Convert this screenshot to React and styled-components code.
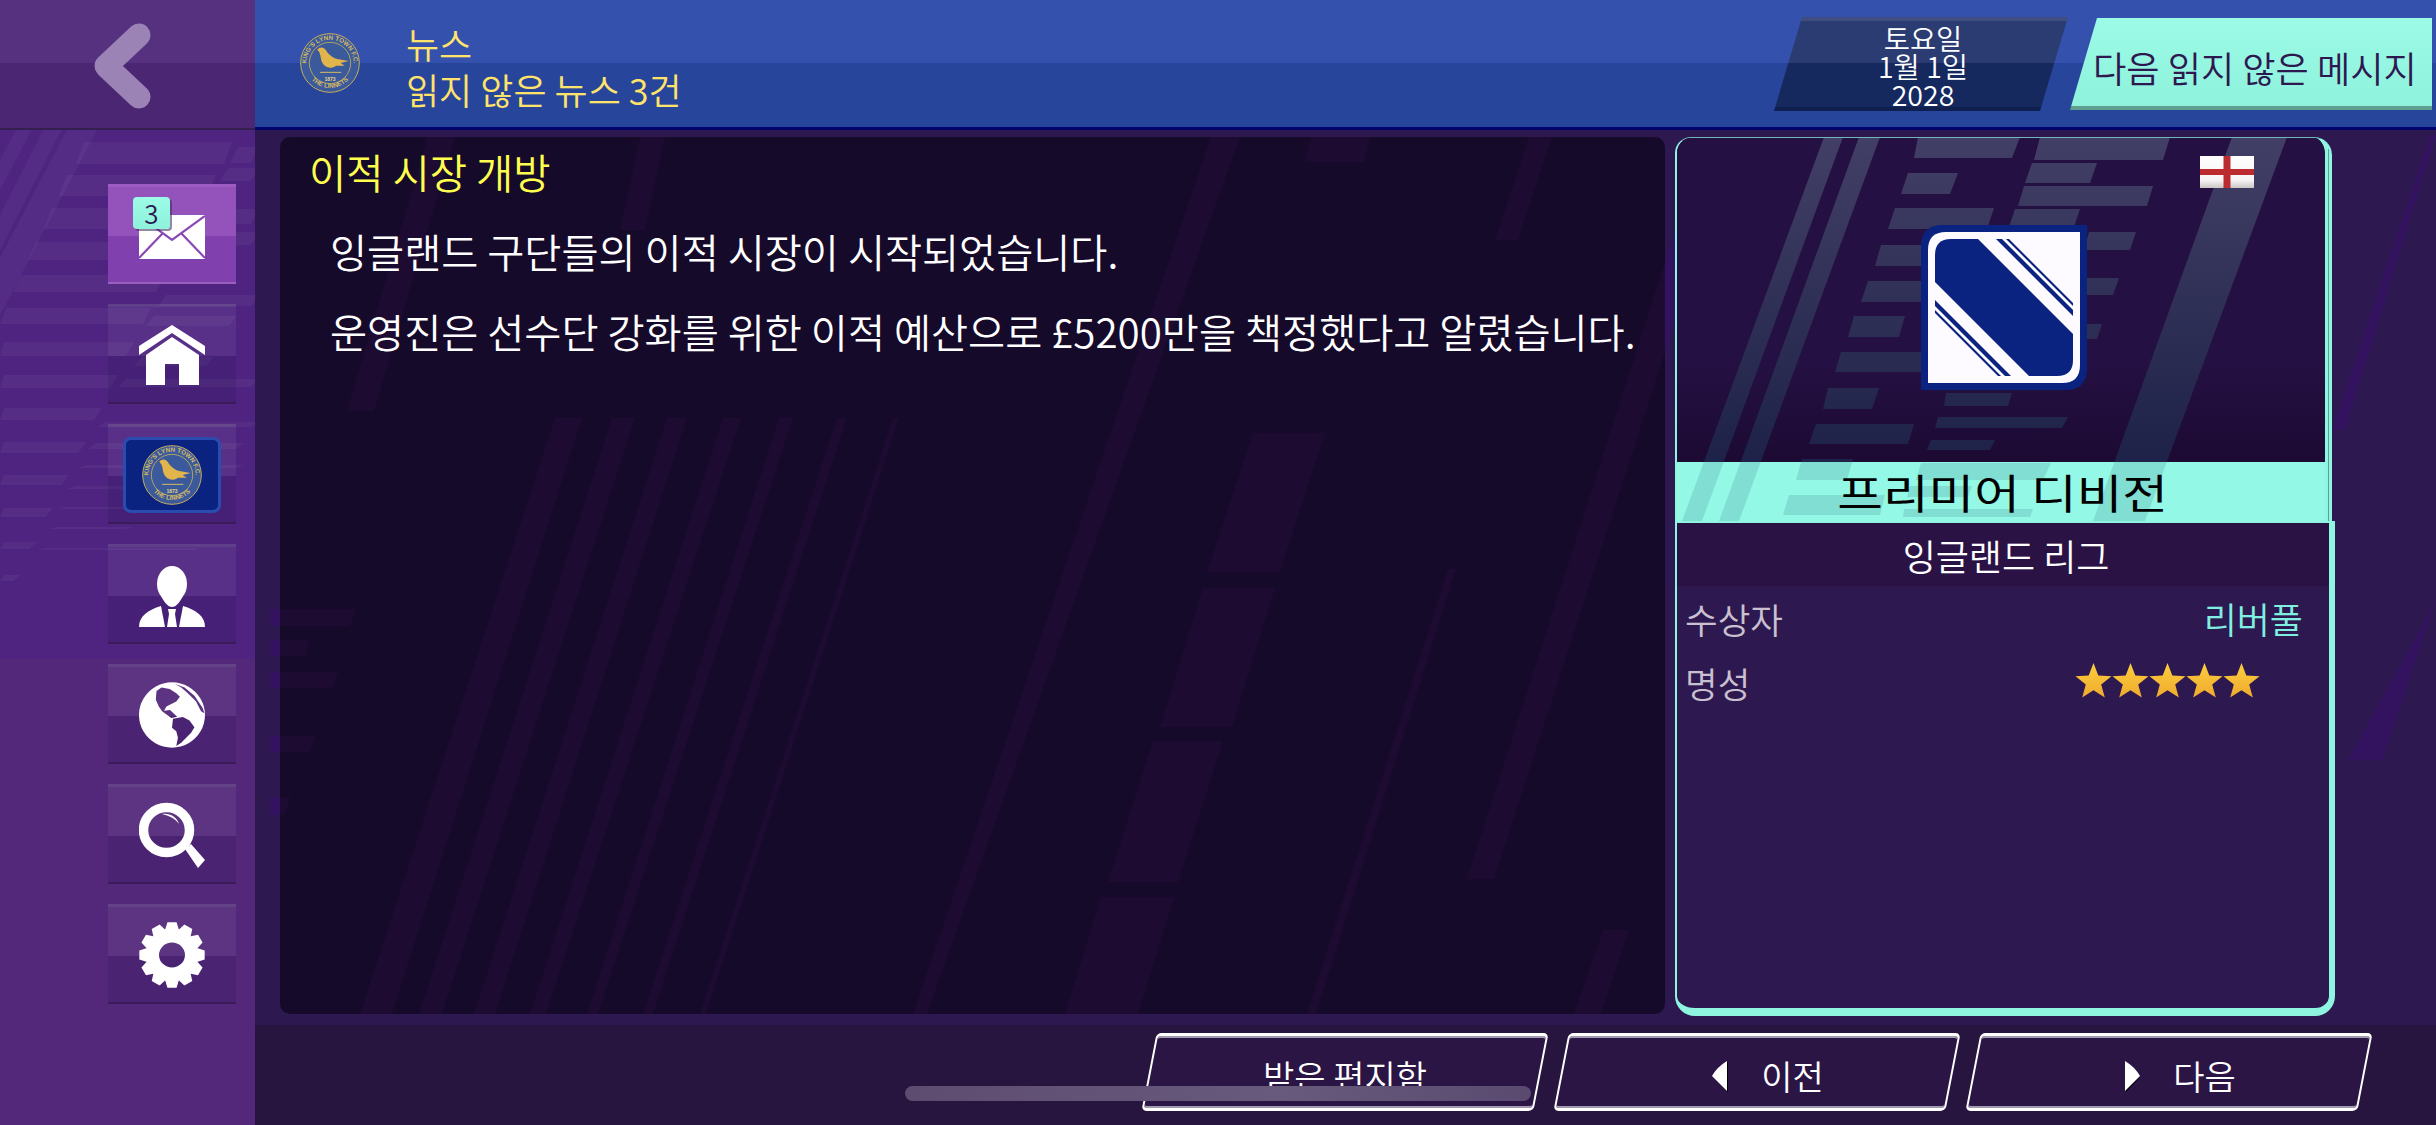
import React, { useId } from "react";
import styled, { createGlobalStyle } from "styled-components";

const FONT = `"Noto Sans CJK KR", "Noto Sans", sans-serif`;

const GlobalStyle = createGlobalStyle`
  html, body {
    margin: 0;
    padding: 0;
    background: #2d1850;
    font-family: ${FONT};
  }
  * { box-sizing: border-box; }
`;

// background shapes, all in page coordinates: [x top left, x top right, y top, x bottom left, x bottom right, y bottom]
const panelShapes = [
  [555, 582, 418, 360, 392, 1014],
  [612, 635, 418, 419, 442, 1014],
  [667, 687, 418, 474, 495, 1014],
  [723, 741, 418, 530, 546, 1014],
  [779, 793, 418, 587, 598, 1014],
  [837, 847, 418, 643, 653, 1014],
  [893, 899, 418, 700, 706, 1014],
  [1211, 1240, 137, 913, 927, 1014],
  [1253, 1325, 433, 1207, 1280, 572],
  [1203, 1275, 588, 1160, 1232, 727],
  [1153, 1223, 741, 1108, 1178, 882],
  [1101, 1174, 897, 1065, 1138, 1014],
  [1705, 1735, 137, 1467, 1494, 879],
  [1448, 1456, 569, 1307, 1316, 1014],
  [1603, 1629, 930, 1574, 1601, 1014],
  [428, 455, 137, 347, 374, 411],
  [640, 665, 137, 620, 645, 230],
  [1311, 1370, 137, 1305, 1364, 162],
  [1529, 1552, 137, 1495, 1518, 240],
  [270, 356, 609, 270, 350, 626],
  [270, 310, 640, 270, 305, 656],
  [270, 338, 672, 270, 332, 688],
  [270, 315, 736, 270, 310, 752],
  [270, 290, 797, 270, 285, 815],
];

const backdropShapes = [
  [2430, 2436, 135, 2332, 2345, 430],
  [2436, 2436, 600, 2348, 2382, 760],
];

const cardShapes = [
  [1824, 1843, 137, 1682, 1702, 521],
  [1859, 1880, 137, 1719, 1739, 521],
  [2232, 2287, 137, 2093, 2145, 521],
  [1918, 2020, 137, 1914, 2012, 158],
  [2040, 2170, 137, 2034, 2163, 160],
  [1908, 1958, 173, 1901, 1950, 194],
  [2032, 2097, 163, 2025, 2090, 183],
  [2024, 2153, 186, 2018, 2147, 206],
  [1895, 1994, 208, 1888, 1987, 229],
  [2015, 2080, 209, 2009, 2074, 227],
  [1881, 1960, 245, 1875, 1954, 266],
  [2089, 2136, 232, 2084, 2130, 250],
  [1868, 1960, 281, 1861, 1954, 302],
  [2060, 2119, 278, 2055, 2113, 295],
  [1854, 1905, 316, 1848, 1899, 337],
  [2060, 2102, 324, 2055, 2097, 339],
  [1841, 1960, 352, 1835, 1954, 372],
  [1828, 1879, 388, 1823, 1872, 409],
  [1946, 2012, 393, 1944, 2008, 406],
  [1938, 2068, 417, 1935, 2062, 428],
  [1816, 1914, 424, 1809, 1908, 444],
  [1931, 1995, 440, 1927, 1990, 450],
  [1802, 1853, 459, 1796, 1847, 480],
  [1921, 2051, 463, 1916, 2043, 480],
  [1910, 1972, 486, 1907, 1968, 497],
  [1789, 1885, 495, 1783, 1880, 515],
  [1904, 2033, 509, 1903, 2030, 517],
];

const sidebarBlocks = [
  [80, 228, 142, 164], [63, 212, 175, 196], [48, 195, 208, 229], [32, 177, 242, 260],
  [17, 160, 275, 292], [2, 147, 308, 324], [0, 130, 342, 356], [0, 114, 375, 388],
  [0, 98, 408, 420], [0, 82, 442, 453], [0, 65, 475, 485], [0, 49, 508, 517],
  [0, 33, 542, 549], [0, 17, 575, 581],
  [234, 255, 147, 163], [224, 255, 168, 181], [192, 255, 209, 224], [177, 255, 232, 245],
  [162, 255, 295, 306], [150, 233, 316, 326], [138, 210, 357, 366], [122, 255, 379, 387],
  [102, 255, 422, 427], [92, 240, 443, 449], [82, 240, 465, 468], [71, 200, 486, 489],
  [62, 130, 507, 509], [52, 130, 527, 529], [42, 198, 548, 550],
  [150, 255, 8, 35], [140, 255, 42, 63], [120, 255, 72, 98], [102, 255, 108, 127],
];

const toPoints = ([a, b, y1, c, d, y2]) => `${a},${y1} ${b},${y1} ${d},${y2} ${c},${y2}`;

const gearPath = (() => {
  const teeth = 12;
  const outer = 33;
  const inner = 26.5;
  const points = [];
  for (let i = 0; i < teeth; i++) {
    const step = (Math.PI * 2) / teeth;
    const mid = i * step;
    [
      [-0.5, inner],
      [-0.27, outer],
      [0.27, outer],
      [0.5, inner],
    ].forEach(([offset, radius]) => {
      const angle = mid + offset * step * 0.98;
      points.push(`${(33 + Math.sin(angle) * radius).toFixed(2)} ${(33 - Math.cos(angle) * radius).toFixed(2)}`);
    });
  }
  return `M${points.join("L")}Z M20 33a13 12.5 0 1 0 26 0a13 12.5 0 1 0 -26 0Z`;
})();

const Crest = ({ size }) => {
  const id = useId().replace(/[^a-zA-Z0-9]/g, "");
  return (
    <CrestSvg $size={size} viewBox="0 0 180 180">
      <defs>
        <path id={`${id}top`} d="M24 118A71 71 0 1 1 156 118" />
        <path id={`${id}bottom`} d="M26 128A74 74 0 0 0 154 128" />
      </defs>
      <circle cx="90" cy="90" r="88" fill="#3a5a9c" stroke="#c9ad5c" strokeWidth="3" />
      <circle cx="90" cy="90" r="62" fill="none" stroke="#c9ad5c" strokeWidth="2.5" />
      <text fill="#d8bb64" fontSize="19" fontFamily="'Liberation Sans', sans-serif" fontWeight="700">
        <textPath href={`#${id}top`} startOffset="50%" textAnchor="middle">KING'S LYNN TOWN F.C.</textPath>
      </text>
      <text fill="#d8bb64" fontSize="19" fontFamily="'Liberation Sans', sans-serif" fontWeight="700">
        <textPath href={`#${id}bottom`} startOffset="50%" textAnchor="middle">THE LINNETS</textPath>
      </text>
      <path
        d="M52 50C60 40 72 42 78 52C86 66 100 76 112 78L146 84L122 90L134 98L108 98C92 110 74 104 66 88C62 78 62 66 58 58Z"
        fill="#e2b44c"
      />
      <path d="M60 118H124" stroke="#d8bb64" strokeWidth="3" />
      <text x="90" y="143" textAnchor="middle" fill="#e6d48c" fontSize="15" fontWeight="700" fontFamily="'Liberation Sans', sans-serif">1873</text>
    </CrestSvg>
  );
};

const NavIcon = ({ name }) => {
  if (name === "crest") {
    return (
      <ClubBox>
        <Crest size={60} />
      </ClubBox>
    );
  }
  if (name === "home") {
    return (
      <IconSvg $h={60} viewBox="138 325 66 60">
        <path d="M171 325L204 346V355L171 333L138 355V346Z" fill="#fff" />
        <path d="M171 337L198 355V385H178V364H164V385H145V355Z" fill="#fff" />
      </IconSvg>
    );
  }
  if (name === "person") {
    return (
      <IconSvg $h={61} $shift={4} viewBox="138 566 66 61">
        <ellipse cx="171" cy="584" rx="15" ry="18" fill="#fff" />
        <path d="M160 596C164 604 168 607 171 607C174 607 178 604 182 596Z" fill="#fff" />
        <path d="M160 606L164 627H138C138 616 147 610 160 606Z" fill="#fff" />
        <path d="M182 606L178 627H204C204 616 195 610 182 606Z" fill="#fff" />
        <path d="M167 609H175L174 614L176 627H166L168 614Z" fill="#fff" />
      </IconSvg>
    );
  }
  if (name === "globe") {
    return (
      <IconSvg $h={66} viewBox="52 92 200 198">
        <path
          fillRule="evenodd"
          fill="#fff"
          d="M152 92A100 99 0 1 1 151.9 92Z
             M105 118L120 108L145 112L165 125L176 136L165 150L150 158L135 165L128 178L146 176L168 196L150 200L122 180L112 165L103 145Z
             M155 202L185 197L205 208L220 228L210 245L195 260L180 275L165 285L170 260L165 240L152 230Z
             M160 96L190 108L220 133L245 170L250 186L240 180L225 150L200 125L180 108Z"
        />
      </IconSvg>
    );
  }
  if (name === "search") {
    return (
      <IconSvg $h={66} viewBox="138 801 66 66">
        <ellipse cx="165.5" cy="829" rx="23" ry="22.5" fill="none" stroke="#fff" strokeWidth="9.5" />
        <path d="M184 848L190 843L204 859L197 867Z" fill="#fff" />
        <path d="M161 813C169 812 176 816 178 823C174 817 168 815 161 813Z" fill="#fff" />
      </IconSvg>
    );
  }
  return (
    <IconSvg $h={66} viewBox="0 0 66 66">
      <path d={gearPath} fill="#fff" fillRule="evenodd" />
    </IconSvg>
  );
};

const navItems = ["home", "crest", "person", "globe", "search", "gear"];

const App = () => {
  return (
    <Page>
      <GlobalStyle />
      <Sidebar>
        <SidebarArt viewBox="0 0 255 1125" preserveAspectRatio="none">
          <polygon points="85,0 100,0 0,190 0,160" fill="#ffffff" fillOpacity="0.04" />
          <polygon points="110,0 128,0 0,250 0,215" fill="#ffffff" fillOpacity="0.04" />
          <polygon points="135,0 165,0 0,315 0,258" fill="#ffffff" fillOpacity="0.04" />
          {sidebarBlocks.map(([x1, x2, y1, y2], i) => (
            <polygon
              key={i}
              points={`${x1 + 4},${y1} ${x2 + 4},${y1} ${x2 - 4},${y2} ${Math.max(x1 - 4, 0)},${y2}`}
              fill="#ffffff"
              fillOpacity="0.045"
            />
          ))}
        </SidebarArt>
        <BackButton>
          <BackChevron viewBox="94 23 57 86">
            <path d="M139 35L106 66L139 97" fill="none" stroke="#9b83b6" strokeWidth="23" strokeLinecap="round" strokeLinejoin="round" />
          </BackChevron>
        </BackButton>
        <NavList>
          <NavItem $active>
            <EnvelopeWrap>
              <EnvelopeSvg viewBox="0 0 66 44">
                <rect width="66" height="44" fill="#fff" />
                <path d="M0 1L33 25L66 1M0 43L24 18M66 43L42 18" fill="none" stroke="#8a48b4" strokeWidth="2.2" />
              </EnvelopeSvg>
              <CountBadge>3</CountBadge>
            </EnvelopeWrap>
          </NavItem>
          {navItems.map((name) => (
            <NavItem key={name}>
              <NavIcon name={name} />
            </NavItem>
          ))}
        </NavList>
      </Sidebar>

      <Main>
        <Header>
          <Crest size={60} />
          <HeaderTitles>
            <HeaderTitle>뉴스</HeaderTitle>
            <HeaderTitle>읽지 않은 뉴스 3건</HeaderTitle>
          </HeaderTitles>
          <DateBox>
            <DateLine>토요일</DateLine>
            <DateLine>1월 1일</DateLine>
            <DateLine>2028</DateLine>
          </DateBox>
          <NextUnread>다음 읽지 않은 메시지</NextUnread>
        </Header>

        <Content>
          <BackdropArt viewBox="255 130 2181 895">
            {[...panelShapes, ...backdropShapes].map((shape, i) => (
              <polygon key={i} points={toPoints(shape)} fill="#33135f" />
            ))}
          </BackdropArt>
          <MessagePanel>
            <PanelArt viewBox="280 137 1385 877">
              {panelShapes.map((shape, i) => (
                <polygon key={i} points={toPoints(shape)} fill="#1d0b31" />
              ))}
            </PanelArt>
            <MessageTitle>이적 시장 개방</MessageTitle>
            <MessageBody>
              <p>잉글랜드 구단들의 이적 시장이 시작되었습니다.</p>
              <p>운영진은 선수단 강화를 위한 이적 예산으로 £5200만을 책정했다고 알렸습니다.</p>
            </MessageBody>
          </MessagePanel>

          <Card>
            <CardUpper>
              <CardBanner>
                <PanelArt viewBox="1677 138 648 324">
                  <defs>
                    <linearGradient id="cardStripe" x1="0" y1="138" x2="0" y2="462" gradientUnits="userSpaceOnUse">
                      <stop offset="0" stopColor="#423f66" />
                      <stop offset="1" stopColor="#1e2248" />
                    </linearGradient>
                  </defs>
                  {cardShapes.map((shape, i) => (
                    <polygon key={i} points={toPoints(shape)} fill="url(#cardStripe)" />
                  ))}
                </PanelArt>
                <Flag viewBox="0 0 54 32">
                  <defs>
                    <linearGradient id="flagShade" x1="0" y1="0" x2="0" y2="1">
                      <stop offset="0" stopColor="#fff" />
                      <stop offset="0.75" stopColor="#f6f4f4" />
                      <stop offset="1" stopColor="#c9c6c6" />
                    </linearGradient>
                  </defs>
                  <rect width="54" height="32" fill="url(#flagShade)" />
                  <rect x="23.5" width="7" height="32" fill="#bb2b30" />
                  <rect y="13" width="54" height="6" fill="#bb2b30" />
                </Flag>
                <LeagueBadge viewBox="0 0 166 165">
                  <defs>
                    <clipPath id="badgeInner">
                      <path d="M30 14H152V135Q152 151 136 151H14V30Q14 14 30 14Z" />
                    </clipPath>
                  </defs>
                  <path d="M22 0H166V143Q166 165 144 165H0V22Q0 0 22 0Z" fill="#0a2380" />
                  <path d="M25 7H159V140Q159 158 141 158H7V25Q7 7 25 7Z" fill="#fdfbff" />
                  <g clipPath="url(#badgeInner)">
                    <polygon points="-30,13 13,-30 196,153 153,196" fill="#0a2380" />
                    <polygon points="61,0 67,0 166,99 166,105" fill="#0a2380" />
                    <polygon points="71,0 74,0 166,92 166,95" fill="#0a2380" />
                    <polygon points="0,61 0,67 99,166 105,166" fill="#0a2380" />
                    <polygon points="0,71 0,74 92,166 95,166" fill="#0a2380" />
                  </g>
                </LeagueBadge>
              </CardBanner>
              <CardBand>
                <PanelArt viewBox="1677 462 648 59">
                  {cardShapes.map((shape, i) => (
                    <polygon key={i} points={toPoints(shape)} fill="#80dfd2" />
                  ))}
                </PanelArt>
                <BandTitle>프리미어 디비전</BandTitle>
              </CardBand>
            </CardUpper>
            <CardLower>
              <LeagueRow>잉글랜드 리그</LeagueRow>
              <InfoRow>
                <InfoLabel>수상자</InfoLabel>
                <InfoLink>리버풀</InfoLink>
              </InfoRow>
              <InfoRow>
                <InfoLabel>명성</InfoLabel>
                <Stars>
                  {[0, 1, 2, 3, 4].map((n) => (
                    <svg key={n} width="37" height="35" viewBox="0 0 37 35">
                      <defs>
                        <linearGradient id={`star${n}`} x1="0" y1="0" x2="0" y2="1">
                          <stop offset="0" stopColor="#fbcf3e" />
                          <stop offset="1" stopColor="#f0a92e" />
                        </linearGradient>
                      </defs>
                      <path d="M18.5 0L23.3 12.6L36.5 13.3L26.2 21.6L29.8 34.6L18.5 27.3L7.2 34.6L10.8 21.6L0.5 13.3L13.7 12.6Z" fill={`url(#star${n})`} />
                    </svg>
                  ))}
                </Stars>
              </InfoRow>
            </CardLower>
          </Card>
        </Content>

        <BottomBar>
          <ActionButton>
            <ButtonLabel>받은 편지함</ButtonLabel>
          </ActionButton>
          <ActionButton $withArrow>
            <Arrow viewBox="0 0 18 31">
              <path d="M16 0L2 15L16 30Z" fill="#000" transform="translate(1 1)" />
              <path d="M16 0V30L1 15Q6 6 16 0Z" fill="#fff" />
            </Arrow>
            <ButtonLabel>이전</ButtonLabel>
          </ActionButton>
          <ActionButton $withArrow>
            <Arrow viewBox="0 0 18 31">
              <path d="M2 1L16 16L2 31Z" fill="#000" transform="translate(1 0)" />
              <path d="M2 0V30L17 15Q12 6 2 0Z" fill="#fff" />
            </Arrow>
            <ButtonLabel>다음</ButtonLabel>
          </ActionButton>
        </BottomBar>
      </Main>
      <HomeIndicator />
    </Page>
  );
};

export default App;

const Page = styled.div`
  position: relative;
  width: 2436px;
  height: 1125px;
  overflow: hidden;
  display: grid;
  grid-template-columns: 255px 1fr;
  color: #fff;
  font-family: ${FONT};
  font-weight: 350;
`;

const Sidebar = styled.aside`
  position: relative;
  display: flex;
  flex-direction: column;
  background: linear-gradient(#4e2480 0, #4e2480 659px, #53287b 659px);
`;

const SidebarArt = styled.svg`
  position: absolute;
  inset: 0;
  width: 100%;
  height: 100%;
`;

const BackButton = styled.div`
  position: relative;
  height: 130px;
  padding: 23px 0 0 94px;
  background: linear-gradient(#553180 0, #553180 63px, #4b2673 63px);
  border-bottom: 2px solid #33204f;
`;

const BackChevron = styled.svg`
  display: block;
  width: 57px;
  height: 86px;
`;

const NavList = styled.nav`
  position: relative;
  display: flex;
  flex-direction: column;
  gap: 20px;
  padding: 54px 0 0 108px;
`;

const NavItem = styled.div`
  position: relative;
  width: 128px;
  height: 100px;
  display: flex;
  align-items: center;
  justify-content: center;
  background: ${(p) =>
    p.$active
      ? "linear-gradient(#9452bb 0, #9452bb 52%, #8040ae 52%)"
      : "linear-gradient(rgba(255,255,255,.055) 0, rgba(255,255,255,.055) 52%, rgba(20,10,60,.14) 52%)"};
  border-top: 3px solid ${(p) => (p.$active ? "#9c5cc2" : "rgba(255,255,255,.14)")};
  border-bottom: 2px solid ${(p) => (p.$active ? "#9a60c0" : "#3a1c58")};
`;

const IconSvg = styled.svg`
  display: block;
  width: 66px;
  height: ${(p) => p.$h}px;
  margin-top: ${(p) => p.$shift || 0}px;
`;

const EnvelopeWrap = styled.div`
  position: relative;
  width: 66px;
  height: 44px;
  margin-top: 5px;
  line-height: 0;
`;

const EnvelopeSvg = styled.svg`
  display: block;
  width: 66px;
  height: 44px;
`;

const CountBadge = styled.span`
  position: absolute;
  left: -6px;
  top: -18px;
  width: 37px;
  height: 32px;
  display: flex;
  align-items: center;
  justify-content: center;
  border-radius: 4px;
  background: linear-gradient(#9cfbe6, #8ef2dc);
  box-shadow: 2px 2px 0 rgba(60, 40, 90, 0.55);
  color: #2d1850;
  font-size: 26px;
  line-height: 1;
`;

const ClubBox = styled.div`
  width: 98px;
  height: 76px;
  display: flex;
  align-items: center;
  justify-content: center;
  background: #0a2380;
  border: 3px solid #2a4cae;
  border-radius: 8px;
`;

const CrestSvg = styled.svg`
  flex: none;
  display: block;
  width: ${(p) => p.$size}px;
  height: ${(p) => p.$size}px;
`;

const Main = styled.main`
  display: flex;
  flex-direction: column;
  min-width: 0;
`;

const Header = styled.header`
  height: 130px;
  display: flex;
  align-items: flex-start;
  padding: 33px 0 0 45px;
  background: linear-gradient(#3551ae 0, #3551ae 63px, #28459c 63px);
  border-bottom: 3px solid #02046e;
`;

const HeaderTitles = styled.div`
  display: flex;
  flex-direction: column;
  width: 1368px;
  margin: -13px 0 0 46px;
`;

const HeaderTitle = styled.div`
  height: 46px;
  color: #ffe36a;
  font-size: 36px;
  line-height: 46px;
  white-space: nowrap;
`;

const DateBox = styled.div`
  width: 294px;
  height: 94px;
  margin-top: -16px;
  display: flex;
  flex-direction: column;
  align-items: center;
  padding: 7px 0 0 4px;
  clip-path: polygon(28px 0, 100% 0, 266px 100%, 0 100%);
  background: linear-gradient(
    #3f4d80 0,
    #3f4d80 4px,
    #2a3c72 4px,
    #2a3c72 46px,
    #16295f 46px,
    #16295f 90px,
    #0f1f50 90px
  );
`;

const DateLine = styled.div`
  height: 28px;
  font-size: 28.5px;
  line-height: 28px;
  color: #fff;
  white-space: nowrap;
`;

const NextUnread = styled.div`
  width: 362px;
  height: 92px;
  margin: -15px 0 0 2px;
  display: flex;
  align-items: center;
  padding: 6px 0 0 23px;
  clip-path: polygon(27px 0, 100% 0, 100% 100%, 0 100%);
  background: linear-gradient(#9cfbe6 0, #8ef2dc 88px, #5f9f90 88px);
  color: #2d1850;
  font-size: 36.2px;
  white-space: nowrap;
`;

const Content = styled.section`
  position: relative;
  height: 895px;
  display: flex;
  align-items: flex-start;
  gap: 10px;
  padding: 7px 0 0 25px;
  background: #2d1850;
`;

const BackdropArt = styled.svg`
  position: absolute;
  inset: 0;
  width: 100%;
  height: 100%;
`;

const PanelArt = styled.svg`
  position: absolute;
  inset: 0;
  width: 100%;
  height: 100%;
`;

const MessagePanel = styled.article`
  position: relative;
  width: 1385px;
  height: 877px;
  overflow: hidden;
  border-radius: 10px;
  background: #160a2b;
  padding: 11px 29px 0;
`;

const MessageTitle = styled.h2`
  position: relative;
  margin: 0;
  color: #ffff4d;
  font-size: 40.5px;
  font-weight: 350;
  line-height: 48px;
`;

const MessageBody = styled.div`
  position: relative;
  margin-top: 28px;
  padding-left: 21px;
  font-size: 40.3px;

  p {
    margin: 0 0 26px;
    line-height: 54px;
    white-space: nowrap;
  }
`;

const Card = styled.aside`
  position: relative;
  width: 660px;
  height: 879px;
  display: flex;
  flex-direction: column;

  &::after {
    content: "";
    position: absolute;
    left: 653px;
    top: 12px;
    width: 1px;
    height: 372px;
    background: #5f9f9a;
  }
`;

const CardUpper = styled.div`
  width: 657px;
  height: 384px;
  display: flex;
  flex-direction: column;
  overflow: hidden;
  border-left: 2px solid #8ff5e0;
  border-top: 1px solid #6fb8b8;
  border-right: 7px solid #8ff5e0;
  border-radius: 16px 18px 0 0;
`;

const CardBanner = styled.div`
  position: relative;
  height: 324px;
  background: linear-gradient(#241042 0, #241042 70%, #1c0a33 100%);
`;

const Flag = styled.svg`
  position: absolute;
  right: 71px;
  top: 18px;
  width: 54px;
  height: 32px;
`;

const LeagueBadge = styled.svg`
  position: absolute;
  left: 244px;
  top: 87px;
  width: 166px;
  height: 165px;
`;

const CardBand = styled.div`
  position: relative;
  height: 59px;
  display: flex;
  align-items: center;
  justify-content: center;
  overflow: hidden;
  background: #94f8e6;
`;

const BandTitle = styled.div`
  position: relative;
  margin-left: 4px;
  color: #000;
  font-size: 41px;
  font-weight: 400;
  line-height: 1;
  white-space: nowrap;
  transform: scaleX(1.21);
`;

const CardLower = styled.div`
  flex: 1;
  background: #2e1850;
  border-left: 2px solid #8ff5e0;
  border-top: 2px solid #8ff5e0;
  border-right: 6px solid #8ff5e0;
  border-bottom: 8px solid #8ff5e0;
  border-radius: 0 0 20px 20px;
`;

const LeagueRow = styled.div`
  height: 63px;
  display: flex;
  align-items: center;
  justify-content: center;
  padding-left: 6px;
  background: #2a1245;
  font-size: 36px;
  line-height: 1;
`;

const InfoRow = styled.div`
  display: flex;
  align-items: center;
  justify-content: space-between;
  height: 64px;
  padding: 0 26px 0 8px;
`;

const InfoLabel = styled.span`
  color: #c9c0d0;
  font-size: 35.5px;
`;

const InfoLink = styled.span`
  color: #7ff0e0;
  font-size: 36px;
`;

const Stars = styled.div`
  display: flex;
  margin-right: 43px;
  margin-top: -4px;
`;

const BottomBar = styled.footer`
  flex: 1;
  display: flex;
  gap: 20px;
  padding: 8px 0 0 894px;
  background: #27153f;
`;

const ActionButton = styled.button`
  position: relative;
  flex: none;
  width: 392px;
  height: 78px;
  padding: 8px 0 0 ${(p) => (p.$withArrow ? "21px" : "0")};
  display: flex;
  align-items: center;
  justify-content: center;
  gap: 32px;
  background: none;
  border: none;
  color: #fff;
  font-family: ${FONT};
  font-weight: 350;

  &::before {
    content: "";
    position: absolute;
    inset: 0;
    transform: skewX(-11deg);
    background: #2a1545;
    border-style: solid;
    border-color: #fff;
    border-width: 3px 2px;
    border-radius: 5px;
    box-shadow: inset 0 2px 0 #a49ab0, inset 0 -2px 0 #a49ab0;
  }
`;

const ButtonLabel = styled.span`
  position: relative;
  font-size: 34px;
  line-height: 1;
`;

const Arrow = styled.svg`
  position: relative;
  width: 18px;
  height: 31px;
`;

const HomeIndicator = styled.div`
  position: absolute;
  left: 905px;
  top: 1086px;
  width: 626px;
  height: 15px;
  border-radius: 8px;
  background: linear-gradient(90deg, #5e4c70, #675a7c 60%, #5a4a70);
`;
